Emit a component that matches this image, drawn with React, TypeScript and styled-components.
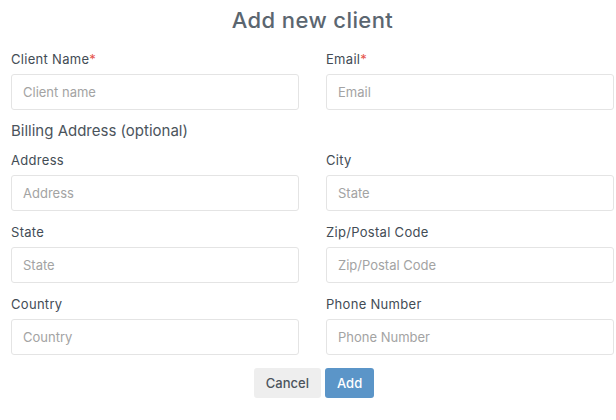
import React from "react";
import styled, { createGlobalStyle } from "styled-components";

const Global = createGlobalStyle`
  html, body { margin: 0; padding: 0; background: #ffffff; }
  body { font-family: "Inter", "Open Sans", sans-serif; }
  * { box-sizing: border-box; }
`;

const Page = styled.div`
  width: 616px;
  padding: 7px 2px 0 11px;
`;

const Title = styled.h1`
  margin: 0 0 17px;
  font-size: 22px;
  line-height: 26px;
  font-weight: 500;
  color: #5b6670;
  text-align: center;
  letter-spacing: 0.4px;
`;

const Grid = styled.div`
  display: grid;
  grid-template-columns: 288px 288px;
  column-gap: 27px;
  row-gap: 12px;
`;

const Field = styled.div`
  display: flex;
  flex-direction: column;
  gap: 6px;
`;

const Label = styled.label`
  font-size: 13px;
  line-height: 18px;
  color: #434c55;
  letter-spacing: 0.3px;
`;

const Req = styled.span`
  color: #e5534b;
`;

const Input = styled.input`
  height: 36px;
  width: 100%;
  border: 1px solid #e4e4e4;
  border-radius: 3px;
  padding: 0 11px;
  font-family: inherit;
  font-size: 13px;
  color: #333;
  outline: none;
  &::placeholder { color: #a3a3a3; }
`;

const Section = styled.div`
  grid-column: 1 / -1;
  font-size: 15px;
  line-height: 20px;
  color: #4b545c;
  margin: -1px 0 -2px;
`;

const Actions = styled.div`
  display: flex;
  justify-content: center;
  gap: 4px;
  margin-top: 13px;
  padding-left: 3px;
`;

const Button = styled.button<{ $primary?: boolean }>`
  height: 30px;
  padding: 0 12px;
  border: none;
  border-radius: 3px;
  font-family: inherit;
  font-size: 13px;
  font-weight: 500;
  background: ${(p) => (p.$primary ? "#5b95c8" : "#eeeeee")};
  color: ${(p) => (p.$primary ? "#ffffff" : "#4b545c")};
  cursor: pointer;
`;

const fields1 = [
  { label: "Client Name", ph: "Client name", req: true },
  { label: "Email", ph: "Email", req: true },
];

const fields2 = [
  { label: "Address", ph: "Address" },
  { label: "City", ph: "State" },
  { label: "State", ph: "State" },
  { label: "Zip/Postal Code", ph: "Zip/Postal Code" },
  { label: "Country", ph: "Country" },
  { label: "Phone Number", ph: "Phone Number" },
];

export default function App() {
  return (
    <Page>
      <Global />
      <Title>Add new client</Title>
      <Grid>
        {fields1.map((f) => (
          <Field key={f.label}>
            <Label>
              {f.label}
              {f.req && <Req>*</Req>}
            </Label>
            <Input placeholder={f.ph} />
          </Field>
        ))}
        <Section>Billing Address (optional)</Section>
        {fields2.map((f) => (
          <Field key={f.label}>
            <Label>{f.label}</Label>
            <Input placeholder={f.ph} />
          </Field>
        ))}
      </Grid>
      <Actions>
        <Button>Cancel</Button>
        <Button $primary>Add</Button>
      </Actions>
    </Page>
  );
}
